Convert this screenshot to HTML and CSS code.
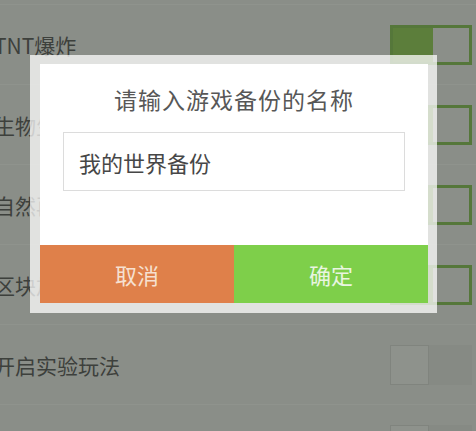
FILE: index.html
```html
<!DOCTYPE html>
<html lang="zh-CN">
<head>
    <meta charset="UTF-8">
    <meta name="viewport" content="width=device-width, initial-scale=1.0">
    <title>游戏备份</title>
    <link rel="stylesheet" href="styles.css">
</head>
<body>
    <div class="list">
        <div class="row">
            <div class="label">TNT爆炸</div>
            <div class="switch on"><div class="knob"></div></div>
        </div>
        <div class="row">
            <div class="label">生物生成</div>
            <div class="switch on"><div class="knob"></div></div>
        </div>
        <div class="row">
            <div class="label">自然再生</div>
            <div class="switch on"><div class="knob"></div></div>
        </div>
        <div class="row">
            <div class="label">区块加载</div>
            <div class="switch on"><div class="knob"></div></div>
        </div>
        <div class="row">
            <div class="label">开启实验玩法</div>
            <div class="switch"><div class="knob"></div></div>
        </div>
        <div class="row">
            <div class="label"></div>
            <div class="switch"><div class="knob"></div></div>
        </div>
    </div>

    <div class="dialog">
        <div class="dialog-body">
            <div class="title">请输入游戏备份的名称</div>
            <div class="input">我的世界备份</div>
        </div>
        <div class="buttons">
            <div class="btn cancel">取消</div>
            <div class="btn ok">确定</div>
        </div>
    </div>
</body>
</html>
```

FILE: styles.css
```css
body,html{
    width: 100%;
    height: 100%;
    margin: 0;
    overflow: hidden;
}
body{
    background-color: #8a8e88;
    font-family: "Noto Sans CJK SC", "Noto Sans", sans-serif;
    position: relative;
}
.list{
    display: flex;
    flex-direction: column;
    padding-top: 4px;
    height: 100%;
    box-sizing: border-box;
    overflow: hidden;
}
.row{
    flex: none;
    height: 80px;
    display: flex;
    align-items: center;
    justify-content: space-between;
    padding-right: 4px;
    border-top: 1px solid #8f938d;
    box-sizing: border-box;
}
.label{
    margin-left: -6px;
    font-size: 21px;
    color: #3d403c;
}
.switch{
    width: 82px;
    height: 40px;
    box-sizing: border-box;
    display: flex;
    background-color: #868a84;
}
.switch .knob{
    width: 39px;
    height: 100%;
    box-sizing: border-box;
    background-color: #8e928c;
    border: 1px solid #80847e;
}
.switch.on{
    border: 3px solid #55773a;
    background-color: #8b8f89;
}
.switch.on .knob{
    width: 40px;
    border: none;
    background-color: #5c7e3b;
}
.dialog{
    position: absolute;
    left: 30px;
    top: 55px;
    width: 407px;
    padding: 9px 9px 10px 10px;
    box-sizing: border-box;
    background-color: rgba(255, 255, 255, 0.74);
}
.dialog-body{
    background-color: #ffffff;
    height: 181px;
    padding: 0 23px;
    box-sizing: border-box;
    display: flex;
    flex-direction: column;
}
.title{
    text-align: center;
    font-size: 23px;
    color: #575757;
    line-height: 34px;
    margin-top: 18px;
    letter-spacing: 1px;
}
.input{
    margin-top: 16px;
    height: 59px;
    border: 1px solid #dcdcdc;
    box-sizing: border-box;
    padding-left: 15px;
    display: flex;
    align-items: center;
    font-size: 22px;
    color: #474747;
}
.buttons{
    display: flex;
    height: 58px;
}
.btn{
    flex: 1;
    display: flex;
    align-items: center;
    justify-content: center;
    font-size: 22px;
}
.cancel{
    background-color: #df804a;
    color: #f6e0d1;
}
.ok{
    background-color: #7ecf4a;
    color: #e9f5e1;
}
```
